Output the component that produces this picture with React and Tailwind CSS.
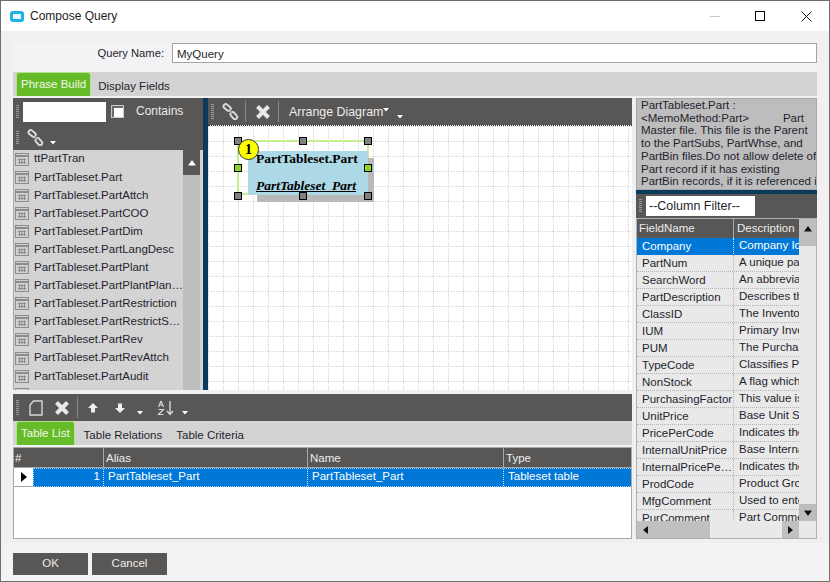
import React from "react";

const Grip = ({ h = "h-[16px]" }) => (
  <span className={`w-[3px] ${h} shrink-0 bg-[repeating-linear-gradient(to_bottom,#9a9a9a_0,#9a9a9a_1px,transparent_1px,transparent_2px)]`} />
);

const Caret = ({ className = "" }) => (
  <svg width="6" height="4" viewBox="0 0 6 4" className={className}><path d="M0 0h6L3 3.5z" fill="#fff" /></svg>
);

const Link = () => (
  <svg width="17" height="17" viewBox="0 0 18 18" fill="none" className="shrink-0">
    <g stroke="#dcdcdc" strokeWidth="2">
      <rect x="1.2" y="2.4" width="8.5" height="4.6" rx="2.300" transform="rotate(40 5.4 4.700)" />
      <rect x="8.300" y="11" width="8.500" height="4.600" rx="2.300" transform="rotate(50 12.500 13.300)" />
    </g>
    <path d="M8 8l2.500 3" stroke="#9a9a9a" strokeWidth="1.500" />
  </svg>
);

const Cross = () => (
  <svg width="14" height="14" viewBox="0 0 14 14" className="shrink-0">
    <path d="M1.500 1.500l11 11M12.500 1.500l-11 11" stroke="#e8e8e8" strokeWidth="4" />
  </svg>
);

const TableIcon = () => (
  <svg width="14" height="13" viewBox="0 0 14 13" className="shrink-0">
    <rect x="0.5" y="0.5" width="13" height="12" fill="#d0d0d0" stroke="#8c8c8c" />
    <path d="M1 3h12" stroke="#8c8c8c" strokeWidth="2" />
    <path d="M3 6.500h8M3 9.500h8M4.500 5.500v5.500M7 5.500v5.500M9.500 5.500v5.500" stroke="#8c8c8c" />
  </svg>
);

const Tri = ({ fill = "#fff" }) => (
  <svg width="8" height="6" viewBox="0 0 8 6"><path d="M4 0l4 5.500H0z" fill={fill} /></svg>
);

const Handle = ({ className, green }) => (
  <span className={`absolute w-[8px] h-[8px] border border-black ${green ? "bg-[#8fd12f]" : "bg-[#808080]"} ${className}`} />
);

const Tab = ({ children }) => (
  <div className="h-full flex items-start px-[4px] pt-[1px] bg-[#66bb29] border-x border-t border-[#b5e08d] rounded-t-[3px] text-[#f2f7ea] leading-[20px]">{children}</div>
);

const tables = ["ttPartTran","PartTableset.Part","PartTableset.PartAttch","PartTableset.PartCOO","PartTableset.PartDim","PartTableset.PartLangDesc","PartTableset.PartPlant","PartTableset.PartPlantPlan…","PartTableset.PartRestriction","PartTableset.PartRestrictS…","PartTableset.PartRev","PartTableset.PartRevAttch","PartTableset.PartAudit","PartTableset.PartCOPart"];

const fields = [
  ["Company","Company Ide"],["PartNum","A unique par"],["SearchWord","An abbrevia"],["PartDescription","Describes th"],["ClassID","The Invento"],["IUM","Primary Inve"],["PUM","The Purchas"],["TypeCode","Classifies Pa"],["NonStock","A flag which"],["PurchasingFactor","This value is"],["UnitPrice","Base Unit Se"],["PricePerCode","Indicates the"],["InternalUnitPrice","Base Interna"],["InternalPricePe…","Indicates the"],["ProdCode","Product Gro"],["MfgComment","Used to ente"],["PurComment","Part Comme"],
];

export default function App() {
  return (
    <div className="w-[830px] h-[582px] overflow-hidden flex flex-col bg-[#f0f0f0] border border-[#6e6e6e] text-[11.5px] text-[#1f1f2e] [font-family:'Liberation_Sans',Arial,sans-serif]">
      {/* title bar */}
      <div className="h-[30px] shrink-0 bg-white flex items-center pl-[9px]">
        <span className="w-[14px] h-[11px] rounded-[3px] border-[3px] border-[#1fb2e8] bg-[#e8f7fd]" />
        <span className="ml-[6px] text-[12px] text-[#222]">Compose Query</span>
        <div className="ml-auto flex items-center">
          <span className="w-[10px] h-px bg-[#c8c8c8] mr-[35px]" />
          <span className="w-[10px] h-[10px] border border-black mr-[36px]" />
          <svg width="11" height="11" viewBox="0 0 11 11" className="mr-[17px]"><path d="M.5.5l10 10M10.500.5l-10 10" stroke="#111" /></svg>
        </div>
      </div>

      {/* body */}
      <div className="flex-1 min-h-0 flex flex-col px-[12px] pt-[12px]">
        {/* query name */}
        <div className="h-[29px] shrink-0 flex items-start bg-[#f3f3f5]">
          <span className="w-[159px] pr-[8px] text-right leading-[21px] text-[11.2px]">Query Name:</span>
          <div className="flex-1 h-[20px] bg-white border border-[#a3a3a3] px-[4px] leading-[20px]">MyQuery</div>
        </div>
        {/* tab strip */}
        <div className="h-[24px] shrink-0 bg-[#d3d3d3] pl-[3px] flex items-end gap-[7px]">
          <Tab>Phrase Build</Tab>
          <span className="leading-[20px]">Display Fields</span>
        </div>

        {/* work area */}
        <div className="h-[441px] shrink-0 mt-[2px] flex gap-[4px]">
          {/* left column */}
          <div className="w-[619px] shrink-0 flex flex-col">
            <div className="h-[292px] shrink-0 flex">
              {/* tables */}
              <div className="w-[190px] shrink-0 flex flex-col">
                <div className="h-[52px] shrink-0 bg-[#595755] flex flex-col">
                  <div className="h-[25px] flex items-center pl-[3px] pt-[2px]">
                    <Grip h="h-[14px]" />
                    <div className="ml-[4px] w-[83px] h-[20px] bg-white" />
                    <span className="ml-[5px] w-[13px] h-[13px] border border-[#c9c9c9] bg-white shadow-[inset_1px_1px_0_1px_#6b6b6b]" />
                    <span className="ml-[12px] text-[#e9e9e9] text-[12px] leading-[14px] mb-[2px]">Contains</span>
                  </div>
                  <div className="flex-1 flex items-center pl-[3px] pt-[2px]">
                    <Grip h="h-[14px]" />
                    <span className="ml-[8px]"><Link /></span>
                    <Caret className="ml-[6px] mt-[11px]" />
                  </div>
                </div>
                <div className="flex-1 min-h-0 flex bg-[#d3d3d3] border-l border-[#a8a8a8] overflow-hidden">
                  <div className="flex-1 min-w-0">
                    {tables.map((t) => (
                      <div key={t} className="h-[18.1px] flex items-center pl-[1px] gap-[5px] whitespace-nowrap overflow-hidden">
                        <TableIcon />
                        <span>{t}</span>
                      </div>
                    ))}
                  </div>
                  <div className="w-[17px] shrink-0 bg-[#bdbdbd] mr-[3px]">
                    <div className="h-[25px] bg-[#595755] flex items-center justify-center"><Tri /></div>
                  </div>
                </div>
              </div>

              {/* splitter */}
              <div className="w-[5px] shrink-0 bg-[#0b3a5b]" />

              {/* diagram */}
              <div className="w-[424px] shrink-0 flex flex-col">
                <div className="h-[27px] shrink-0 bg-[#595755] flex items-center pl-[3px]">
                  <Grip />
                  <span className="ml-[8px]"><Link /></span>
                  <span className="ml-[6px] w-px h-[21px] bg-[#8a8a8a]" />
                  <span className="ml-[10px]"><Cross /></span>
                  <span className="ml-[8px] w-px h-[21px] bg-[#8a8a8a]" />
                  <span className="ml-[10px] text-[#ededed] text-[12.4px] pt-[1px]">Arrange Diagram</span>
                  <Caret className="mb-[3px]" />
                  <Caret className="ml-[8px] mt-[11px]" />
                </div>
                <div className="relative flex-1 min-h-0 bg-white border-t border-dotted border-[#222] overflow-hidden">
                  <svg width="424" height="270" className="absolute left-0 top-0">
                    <defs>
                      <pattern id="g" width="15" height="15" patternUnits="userSpaceOnUse">
                        <path d="M0 .5h15M.5 0v15" stroke="#d4d4d4" strokeDasharray="1 1" fill="none" />
                      </pattern>
                    </defs>
                    <rect width="424" height="270" fill="url(#g)" />
                  </svg>
                  {/* node */}
                  <div className="absolute left-[29px] top-[14px] w-[132px] h-[55px] border-2 border-[#c5ef8e]" />
                  <div className="absolute left-[49px] top-[32px] w-[117px] h-[44px] bg-[#b9b9b9]" />
                  <div className="absolute left-[40px] top-[25px] w-[120px] h-[44px] bg-[#add8e6] flex flex-col items-start justify-between pl-[8px] [font-family:'Liberation_Serif',serif] text-[13.5px] text-black whitespace-nowrap">
                    <span className="font-bold leading-[15px]">PartTableset.Part</span>
                    <span className="font-bold italic underline leading-[16px] mb-[1px]">PartTableset_Part</span>
                  </div>
                  <Handle className="left-[26px] top-[11px]" />
                  <Handle className="left-[91px] top-[11px]" />
                  <Handle className="left-[156px] top-[11px]" />
                  <Handle green className="left-[26px] top-[38px]" />
                  <Handle green className="left-[156px] top-[38px]" />
                  <Handle className="left-[26px] top-[66px]" />
                  <Handle className="left-[91px] top-[66px]" />
                  <Handle className="left-[156px] top-[66px]" />
                  <div className="absolute left-[30px] top-[13px] w-[21px] h-[21px] rounded-full bg-[#ffff00] border border-[#333] flex items-center justify-center [font-family:'Liberation_Serif',serif] font-bold text-[14px] text-black">1</div>
                </div>
              </div>
            </div>

            {/* bottom */}
            <div className="h-[145px] shrink-0 mt-[4px] flex flex-col">
              <div className="h-[27px] shrink-0 bg-[#595755] flex items-center pl-[3px]">
                <Grip />
                <svg width="14" height="16" viewBox="0 0 14 16" className="ml-[10px]" fill="none"><path d="M4.500 1H13v14H1V5z" stroke="#d8d8d8" strokeWidth="1.400" /></svg>
                <span className="ml-[12px]"><Cross /></span>
                <span className="ml-[8px] w-px h-[21px] bg-[#8a8a8a]" />
                <svg width="10" height="10" viewBox="0 0 10 10" className="ml-[10px]"><path d="M5 0l5 5H7v4.500H3V5H0z" fill="#eee" /></svg>
                <svg width="10" height="10" viewBox="0 0 10 10" className="ml-[17px] rotate-180"><path d="M5 0l5 5H7v4.500H3V5H0z" fill="#eee" /></svg>
                <Caret className="ml-[12px] mt-[11px]" />
                <span className="ml-[5px]"><Grip /></span>
                <svg width="18" height="16" viewBox="0 0 18 16" className="ml-[9px]" fill="none">
                  <path d="M4 1L1.500 7M4 1l2.500 6M2.300 5h3.400M1.500 9.500h5L1.500 14.500h5" stroke="#d8d8d8" strokeWidth="1.200" />
                  <path d="M13 1v13M10 11l3 3.500 3-3.500" stroke="#d8d8d8" strokeWidth="1.400" />
                </svg>
                <Caret className="ml-[7px] mt-[11px]" />
              </div>
              <div className="h-[24px] shrink-0 bg-[#d3d3d3] pl-[3px] flex items-end gap-[9px]">
                <Tab>Table List</Tab>
                <span className="leading-[20px] mr-[5px]">Table Relations</span>
                <span className="leading-[20px]">Table Criteria</span>
              </div>
              <div className="flex-1 min-h-0 mt-[2px] bg-white border border-[#a8a8a8]">
                <div className="h-[20px] bg-[#595755] flex text-[#ededed] leading-[20px] border-b border-[#a8a8a8]">
                  <div className="w-[90px] pl-[1px] border-r border-[#a8a8a8]">#</div>
                  <div className="w-[204px] pl-[2px] border-r border-[#a8a8a8]">Alias</div>
                  <div className="w-[196px] pl-[2px] border-r border-[#a8a8a8]">Name</div>
                  <div className="pl-[2px]">Type</div>
                </div>
                <div className="h-[19px] flex text-white leading-[14px]">
                  <div className="w-[19px] bg-white border-b border-[#a8a8a8] flex items-center justify-center">
                    <svg width="6" height="10" viewBox="0 0 6 10"><path d="M0 0l6 5-6 5z" fill="#000" /></svg>
                  </div>
                  <div className="flex-1 flex bg-[#0078d7] border border-dotted border-[#9cc9ee] border-r-0">
                    <div className="w-[70px] text-right pr-[3px] border-r border-dotted border-[#cfe6f8]">1</div>
                    <div className="w-[204px] pl-[4px] border-r border-dotted border-[#cfe6f8]">PartTableset_Part</div>
                    <div className="w-[196px] pl-[4px] border-r border-dotted border-[#cfe6f8]">PartTableset_Part</div>
                    <div className="pl-[4px]">Tableset table</div>
                  </div>
                </div>
              </div>
            </div>
          </div>

          {/* right panel */}
          <div className="w-[181px] shrink-0 flex flex-col">
            <div className="h-[92px] shrink-0 bg-[#bdbdbd] border border-[#a8a8a8] px-[4px] leading-[12.7px] overflow-hidden">
              <div className="whitespace-nowrap">PartTableset.Part :</div>
              <div className="whitespace-nowrap flex justify-between pr-[8px]"><span>&lt;MemoMethod:Part&gt;</span><span>Part</span></div>
              <div className="whitespace-nowrap">Master file. This file is the Parent</div>
              <div className="whitespace-nowrap">to the PartSubs, PartWhse, and</div>
              <div className="whitespace-nowrap">PartBin files.Do not allow delete of</div>
              <div className="whitespace-nowrap">Part record if it has existing</div>
              <div className="whitespace-nowrap">PartBin records, if it is referenced i</div>
            </div>
            <div className="h-[4px] shrink-0 bg-[#0b3a5b]" />
            <div className="h-[24px] shrink-0 bg-[#595755] flex items-center pl-[3px]">
              <Grip h="h-[14px]" />
              <div className="ml-[4px] w-[109px] h-[20px] bg-white px-[3px] leading-[20px] text-[12.5px]">--Column Filter--</div>
            </div>
            <div className="flex-1 min-h-0 flex flex-col bg-[#e9e9e9] border border-[#b0b0b0] overflow-hidden">
              <div className="flex-1 min-h-0 flex">
                <div className="w-[162px] shrink-0 overflow-hidden">
                  <div className="h-[19px] bg-[#595755] text-[#ededed] flex leading-[19px]">
                    <div className="w-[97px] shrink-0 pl-[2px] border-r border-[#a8a8a8]">FieldName</div>
                    <div className="pl-[3px] whitespace-nowrap">Description</div>
                  </div>
                  {fields.map(([a, b], i) => (
                    <div key={a} className={`h-[17px] flex leading-[16px] whitespace-nowrap border-b border-dotted ${i === 0 ? "bg-[#0078d7] text-white border-[#0078d7]" : "border-[#b5b5b5]"}`}>
                      <div className={`w-[97px] shrink-0 pl-[5px] overflow-hidden border-r border-dotted ${i === 0 ? "border-[#cfe6f8]" : "border-[#b5b5b5]"}`}>{a}</div>
                      <div className="pl-[5px] overflow-hidden leading-[15px]">{b}</div>
                    </div>
                  ))}
                </div>
                <div className="flex-1 bg-[#e9e9e9] flex flex-col justify-between">
                  <div className="h-[27px] pt-[7px] flex items-start justify-center bg-[#bdbdbd]"><Tri fill="#111" /></div>
                  <div className="h-[17px] flex items-center justify-center bg-[#bdbdbd]"><span className="rotate-180 flex"><Tri fill="#111" /></span></div>
                </div>
              </div>
              <div className="h-[17px] shrink-0 flex items-center bg-[#e9e9e9]">
                <div className="w-[73px] h-full bg-[#c0c0c0] flex items-center pl-[6px]"><svg width="5" height="8" viewBox="0 0 5 8"><path d="M5 0L0 4l5 4z" fill="#111" /></svg></div>
                <div className="w-[72px]" />
                <div className="w-[17px] h-full bg-[#c0c0c0] flex items-center justify-center"><svg width="5" height="8" viewBox="0 0 5 8"><path d="M0 0l5 4-5 4z" fill="#111" /></svg></div>
              </div>
            </div>
          </div>
        </div>

        {/* buttons */}
        <div className="flex-1 flex items-start gap-[4px] mt-[4px] -mx-[12px] px-[12px] pt-[10px] bg-[#f3f3f5]">
          <div className="w-[75px] h-[22px] bg-[#595755] text-[#ededed] flex items-center justify-center">OK</div>
          <div className="w-[75px] h-[22px] bg-[#595755] text-[#ededed] flex items-center justify-center">Cancel</div>
        </div>
      </div>
    </div>
  );
}
